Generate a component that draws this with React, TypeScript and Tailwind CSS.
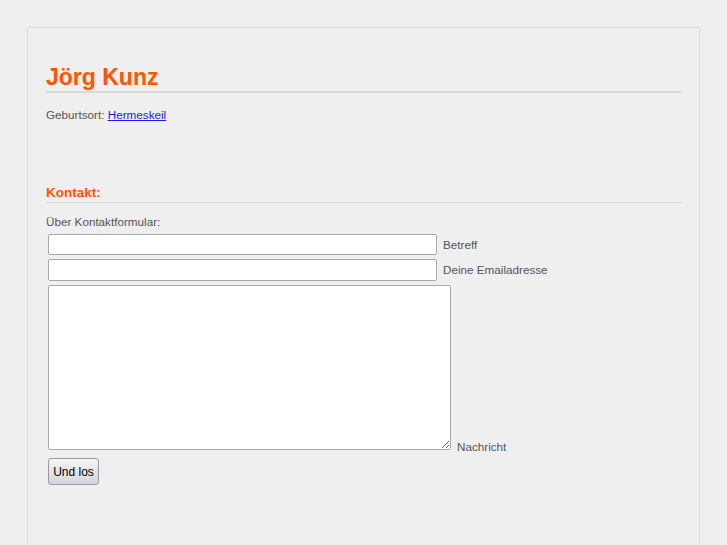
export default function App() {
  return (
    <div className="min-h-screen bg-[#efefef] pt-[27px] pl-[27px] font-['Liberation_Sans',Arial,sans-serif] text-[#555]">
      <div className="w-[673px] min-h-[540px] border border-[#dedede] px-[18px] pt-[36px]">
        <h1 className="text-[23px] leading-[27px] font-bold text-[#ff5500] border-b-2 border-[#d9d9d9]">
          Jörg Kunz
        </h1>

        <p className="mt-[14px] text-[11.7px] leading-[16px]">
          Geburtsort:{" "}
          <a href="#" className="text-[#1a1ae6] underline">
            Hermeskeil
          </a>
        </p>

        <h2 className="mt-[61px] pb-px text-[13.5px] leading-[17px] font-bold text-[#ff5500] border-b border-[#d9d9d9]">
          Kontakt:
        </h2>

        <p className="mt-[11px] text-[11.7px] leading-[16px]">Über Kontaktformular:</p>

        <form className="mt-[4px] ml-[2px] flex flex-col text-[11.7px]">
          <div className="flex items-center gap-[6px]">
            <input
              type="text"
              className="w-[389px] h-[21px] bg-white border border-[#a9a9a9] rounded-[2px] px-1 outline-none"
            />
            <label>Betreff</label>
          </div>
          <div className="mt-[4px] flex items-center gap-[6px]">
            <input
              type="text"
              className="w-[389px] h-[22px] bg-white border border-[#a9a9a9] rounded-[2px] px-1 outline-none"
            />
            <label>Deine Emailadresse</label>
          </div>
          <div className="mt-[4px] flex items-end gap-[6px]">
            <textarea className="w-[403px] h-[165px] bg-white border border-[#a9a9a9] rounded-[2px] outline-none" />
            <label className="leading-[16px] -mb-[5px]">Nachricht</label>
          </div>
          <div className="mt-[8px]">
            <button
              type="button"
              className="h-[27px] w-[51px] rounded-[3px] border border-[#9a9aa0] bg-gradient-to-b from-[#f6f6f8] to-[#d4d4da] text-[12px] text-black"
            >
              Und los
            </button>
          </div>
        </form>
      </div>
    </div>
  );
}
